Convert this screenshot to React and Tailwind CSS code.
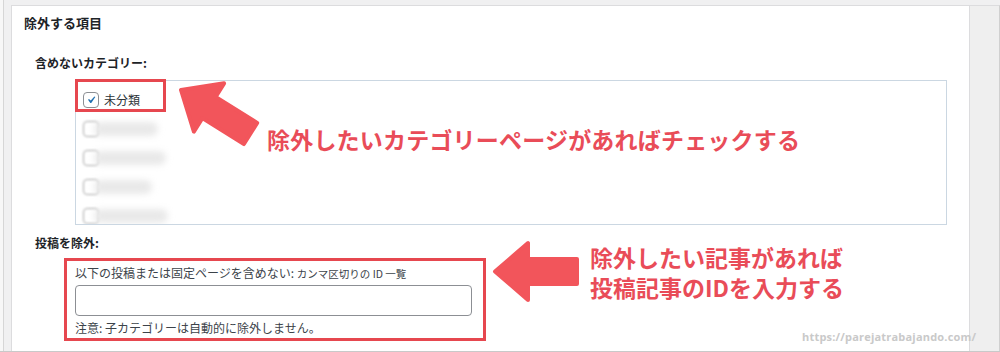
const ARROW = '#f2555b';
const NOTE  = '#e94c58';
const FRAME = '#e6474f';

function Check({ checked, blurred }) {
  return (
    <span className={`w-[16px] h-[16px] shrink-0 rounded-[4px] border bg-white flex items-center justify-center ${blurred ? 'blur-[0.8px] border-[#a8a8a8]' : 'border-[#8c8f94]'}`}>
      {checked && (
        <svg viewBox="0 0 20 20" className="w-[20px] h-[20px]">
          <path d="M14.83 4.89l1.34.94-5.81 8.38H9.02L5.78 9.67l1.34-1.25 2.57 2.4z" fill="#2271b1" />
        </svg>
      )}
    </span>
  );
}

function Row({ label, blob }) {
  return (
    <div className="h-[29px] flex items-center gap-[5px] pl-[7px]">
      <Check checked={!!label} blurred={!label} />
      {label
        ? <span className="text-[12px] text-[#2c3338]">{label}</span>
        : <span className="h-[14px] rounded-full bg-[#e9e9e9] blur-[3px] -ml-[10px]" style={{ width: blob }} />}
    </div>
  );
}

// left-pointing arrow, tip at (0, 28.5)
function Arrow({ transform }) {
  return (
    <polygon
      transform={transform}
      points="0,28.5 33,0 33,16 82,16 82,41 33,41 33,57"
      fill={ARROW} stroke={ARROW} strokeWidth="4" strokeLinejoin="round"
    />
  );
}

export default function App() {
  return (
    <div className="relative w-[1000px] h-[352px] overflow-hidden bg-[#f0f0f1] font-['Noto_Sans_CJK_JP','Noto_Sans',sans-serif] border-b border-[#c9c9c9] flex">
      <div className="w-[11px] shrink-0 flex">
        <div className="w-[3px] bg-[#f7f7f7]" />
        <div className="w-px bg-[#d6d6d6]" />
      </div>

      {/* panel */}
      <div className="mt-[5px] w-[959px] shrink-0 bg-white border-t border-x border-[#dcdcde] pt-[8px] pl-[12px]">
        <h2 className="text-[13px] leading-[18px] font-bold text-[#1d2327]">除外する項目</h2>

        <div className="mt-[22px] ml-[11px] text-[12px] leading-[18px] font-semibold text-[#1d2327]">含めないカテゴリー:</div>

        <div className="mt-[8px] ml-[51px] w-[872px] h-[145px] border border-[#cbd7e2] pt-[4px] overflow-hidden">
          <Row label="未分類" />
          <Row blob={64} />
          <Row blob={72} />
          <Row blob={58} />
          <Row blob={74} />
        </div>

        <div className="mt-[9px] ml-[11px] text-[12px] leading-[18px] font-semibold text-[#1d2327]">投稿を除外:</div>

        <div className="ml-[51px] mt-[13px] w-[397px]">
          <div className="text-[12px] leading-[16px] text-[#3c434a]">
            以下の投稿または固定ページを含めない: <span className="text-[10.5px]">カンマ区切りの ID 一覧</span>
          </div>
          <div className="mt-[3px] h-[31px] rounded-[4px] border border-[#8c8f94] bg-white" />
          <div className="mt-[4px] text-[12px] leading-[16px] text-[#3c434a]">注意: 子カテゴリーは自動的に除外しません。</div>
        </div>
      </div>

      {/* right gutter */}
      <div className="flex-1 mt-[5px] bg-[#efefef] border-t border-[#dcdcde] border-r border-r-[#d0d0d0]" />

      {/* annotations */}
      <div className="absolute left-[75px] top-[79px] w-[91px] h-[33px] border-[3px]" style={{ borderColor: FRAME }} />
      <div className="absolute left-[64px] top-[258px] w-[422px] h-[83px] border-[3px]" style={{ borderColor: FRAME }} />

      <svg className="absolute inset-0 pointer-events-none" width="1000" height="352">
        <Arrow transform="translate(181,90) rotate(32) translate(0,-28.5)" />
        <Arrow transform="translate(495,243)" />
      </svg>

      <div className="absolute left-[267px] top-[128px] text-[23px] leading-[23px] font-bold whitespace-nowrap tracking-[0.2px]" style={{ color: NOTE }}>
        除外したいカテゴリーページがあればチェックする
      </div>
      <div className="absolute left-[590px] top-[245px] text-[23px] font-bold whitespace-nowrap flex flex-col gap-[6px]" style={{ color: NOTE }}>
        <div className="leading-[24px]">除外したい記事があれば</div>
        <div className="leading-[24px]">投稿記事のIDを入力する</div>
      </div>

      <div className="absolute left-[802px] top-[329px] text-[11px] leading-[16px] font-bold text-[#c9c9c9] font-['Open_Sans',sans-serif] tracking-[0.2px]">
        https://parejatrabajando.com/
      </div>
    </div>
  );
}
